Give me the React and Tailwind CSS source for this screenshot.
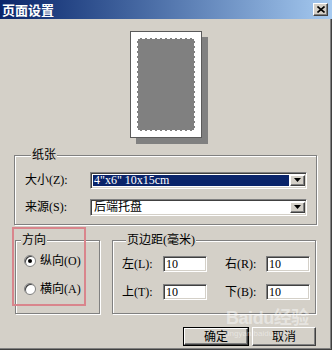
const raised =
  'border border-t-white border-l-white border-r-[#404040] border-b-[#404040] shadow-[inset_-1px_-1px_0_#808080]';
const sunken =
  'border border-t-[#808080] border-l-[#808080] border-r-white border-b-white shadow-[inset_1px_1px_0_#404040,inset_-1px_-1px_0_#d4d0c8]';
const group =
  'border border-[#808080] shadow-[inset_1px_1px_0_#fff,1px_1px_0_#fff] m-0';

function Arrow() {
  return (
    <svg width="7" height="4" viewBox="0 0 7 4">
      <path d="M0 0h7L3.5 4z" fill="#000" />
    </svg>
  );
}

function Select({ value, selected }) {
  return (
    <div className={`flex-1 h-[17px] bg-white flex items-stretch ${sunken} p-[2px] pr-[1px]`}>
      <div
        className={`flex-1 flex items-center pl-[1px] text-[12px] leading-none ${
          selected ? 'bg-[#0a246a] text-white' : 'text-black'
        }`}
      >
        {value}
      </div>
      <div className={`w-[15px] bg-[#d4d0c8] flex items-center justify-center ml-[1px] ${raised}`}>
        <Arrow />
      </div>
    </div>
  );
}

function Radio({ label, checked }) {
  return (
    <div className="flex items-center h-[16px] pl-[8px]">
      <div className="w-[12px] h-[12px] rounded-full bg-white border border-[#808080] shadow-[inset_1px_1px_0_#404040] flex items-center justify-center">
        {checked && <div className="w-[4px] h-[4px] rounded-full bg-black" />}
      </div>
      <span className="ml-[4px] text-[12px]">{label}</span>
    </div>
  );
}

function Margin({ label, value }) {
  return (
    <div className="flex items-center">
      <span className="w-[41px] text-[12px]">{label}</span>
      <div className={`w-[44px] h-[16px] bg-white ${sunken} flex items-center pl-[2px] text-[12px] leading-none`}>
        {value}
      </div>
    </div>
  );
}

export default function App() {
  return (
    <div className="relative w-[332px] h-[350px] bg-[#d4d0c8] overflow-hidden text-black font-['Liberation_Serif','Noto_Sans_CJK_SC',serif] shadow-[inset_-1px_-1px_0_#404040,inset_-2px_-2px_0_#808080]">
      <div className="h-[19px] flex items-center justify-between pl-[2px] pr-[4px] bg-gradient-to-r from-[#0a246a] to-[#a6caf0]">
        <span className="text-white font-bold text-[13px] leading-none font-['Noto_Sans_CJK_SC',sans-serif]">
          页面设置
        </span>
        <div className={`w-[15px] h-[13px] bg-[#d4d0c8] flex items-center justify-center ${raised}`}>
          <svg width="8" height="7" viewBox="0 0 8 7">
            <path d="M0.5 0.5l7 6M7.5 0.5l-7 6" stroke="#000" strokeWidth="1.6" />
          </svg>
        </div>
      </div>

      <div className="mt-[12px] mb-[9px] mx-auto w-[72px] h-[107px] bg-white border border-[#5a5a5a] shadow-[6px_6px_0_#808080] p-[6px]">
        <div className="w-full h-full bg-[#808080] border border-dashed border-white" />
      </div>

      <fieldset className={`ml-[14px] w-[303px] pl-[10px] pr-[9px] pt-[8px] pb-[8px] ${group}`}>
        <legend className="ml-[6px] px-[1px] bg-[#d4d0c8] text-[12px] leading-[16px]">纸张</legend>
        <div className="flex items-center">
          <span className="w-[65px] text-[12px]">大小(Z):</span>
          <Select value={'4"x6" 10x15cm'} selected />
        </div>
        <div className="flex items-center mt-[9px]">
          <span className="w-[65px] text-[12px]">来源(S):</span>
          <Select value="后端托盘" />
        </div>
      </fieldset>

      <div className="flex ml-[15px] mt-[7px] gap-[12px] items-stretch">
        <fieldset className={`w-[85px] pt-[5px] pb-[12px] ${group}`}>
          <legend className="ml-[5px] px-[1px] bg-[#d4d0c8] text-[12px] leading-[16px]">方向</legend>
          <Radio label="纵向(O)" checked />
          <div className="mt-[12px]">
            <Radio label="横向(A)" />
          </div>
        </fieldset>
        <fieldset className={`w-[204px] pl-[9px] pt-[7px] pb-[12px] ${group}`}>
          <legend className="ml-[4px] px-[1px] bg-[#d4d0c8] text-[12px] leading-[16px]">页边距(毫米)</legend>
          <div className="flex gap-[18px]">
            <Margin label="左(L):" value="10" />
            <Margin label="右(R):" value="10" />
          </div>
          <div className="flex gap-[18px] mt-[10px]">
            <Margin label="上(T):" value="10" />
            <Margin label="下(B):" value="10" />
          </div>
        </fieldset>
      </div>

      <div className="flex justify-end gap-[3px] mr-[16px] mt-[13px]">
        <div className="w-[66px] h-[19px] border border-black">
          <div className={`w-full h-full bg-[#d4d0c8] flex items-center justify-center text-[12px] ${raised}`}>
            确定
          </div>
        </div>
        <div className={`w-[64px] h-[19px] bg-[#d4d0c8] flex items-center justify-center text-[12px] ${raised}`}>
          取消
        </div>
      </div>

      <div className="absolute left-[12px] top-[227px] w-[74px] h-[79px] border-2 border-[#d9858c]" />

      <div className="absolute left-[226px] top-[309px] flex flex-col items-start text-white/45 pointer-events-none font-['Liberation_Sans','Noto_Sans_CJK_SC',sans-serif]">
        <span className="text-[18px] font-bold leading-none tracking-tight">Baidu经验</span>
        <span className="text-[8px] leading-none mt-[3px]">jingyan.baidu.com</span>
      </div>
    </div>
  );
}
